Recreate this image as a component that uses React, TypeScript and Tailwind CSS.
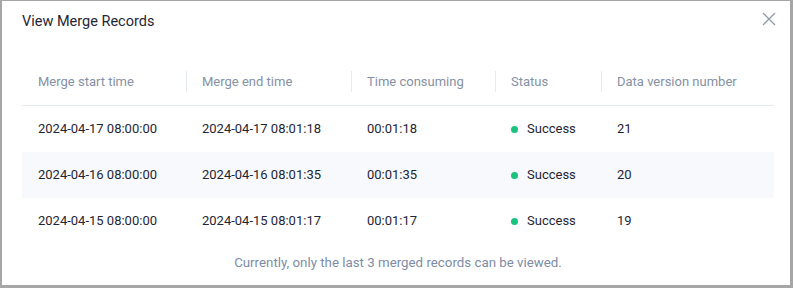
const columns = [
  { label: "Merge start time", w: "w-[164px]" },
  { label: "Merge end time", w: "w-[165px]" },
  { label: "Time consuming", w: "w-[144px]" },
  { label: "Status", w: "w-[106px]" },
  { label: "Data version number", w: "flex-1" },
];

const records = [
  { start: "2024-04-17 08:00:00", end: "2024-04-17 08:01:18", cost: "00:01:18", status: "Success", version: "21" },
  { start: "2024-04-16 08:00:00", end: "2024-04-16 08:01:35", cost: "00:01:35", status: "Success", version: "20" },
  { start: "2024-04-15 08:00:00", end: "2024-04-15 08:01:17", cost: "00:01:17", status: "Success", version: "19" },
];

export default function App() {
  return (
    <div
      className="w-[793px] h-[288px] bg-white border-[#a6a6a6] border-t border-l-2 border-r-[3px] border-b-[3px] pl-5 pr-4 pt-[9px]"
      style={{ fontFamily: "Roboto, 'Open Sans', sans-serif" }}
    >
      {/* Header */}
      <div className="flex items-center justify-between h-6">
        <h2 className="text-[14.5px] text-[#1f2633] leading-6">View Merge Records</h2>
        <button className="mr-[-2px] mt-[-7px] text-[#8e99ab]">
          <svg width="14" height="14" viewBox="0 0 14 14" fill="none" stroke="currentColor" strokeWidth="1.3">
            <path d="M1 1L13 13M13 1L1 13" />
          </svg>
        </button>
      </div>

      {/* Table */}
      <div className="mt-6">
        <div className="flex h-12 border-b border-[#e6ebf3] items-center">
          {columns.map((c, i) => (
            <div key={c.label} className={`${c.w} relative flex items-center h-full pl-4 text-[13px] text-[#8591a5]`}>
              {i > 0 && <span className="absolute left-0 top-[13px] h-[21px] w-px bg-[#e6ebf3]" />}
              {c.label}
            </div>
          ))}
        </div>

        {records.map((r, idx) => (
          <div key={r.start} className={`flex h-[46px] items-center text-[13px] text-[#1f2633] ${idx === 1 ? "bg-[#f7f9fc]" : ""}`}>
            <div className="w-[164px] pl-4">{r.start}</div>
            <div className="w-[165px] pl-4">{r.end}</div>
            <div className="w-[144px] pl-4">{r.cost}</div>
            <div className="w-[106px] pl-4 flex items-center gap-[9px]">
              <span className="w-[7px] h-[7px] rounded-full bg-[#19c37d]" />
              {r.status}
            </div>
            <div className="flex-1 pl-4">{r.version}</div>
          </div>
        ))}
      </div>

      <p className="mt-[9px] text-center text-[13.3px] leading-5 text-[#7d8ca6]">
        Currently, only the last 3 merged records can be viewed.
      </p>
    </div>
  );
}
